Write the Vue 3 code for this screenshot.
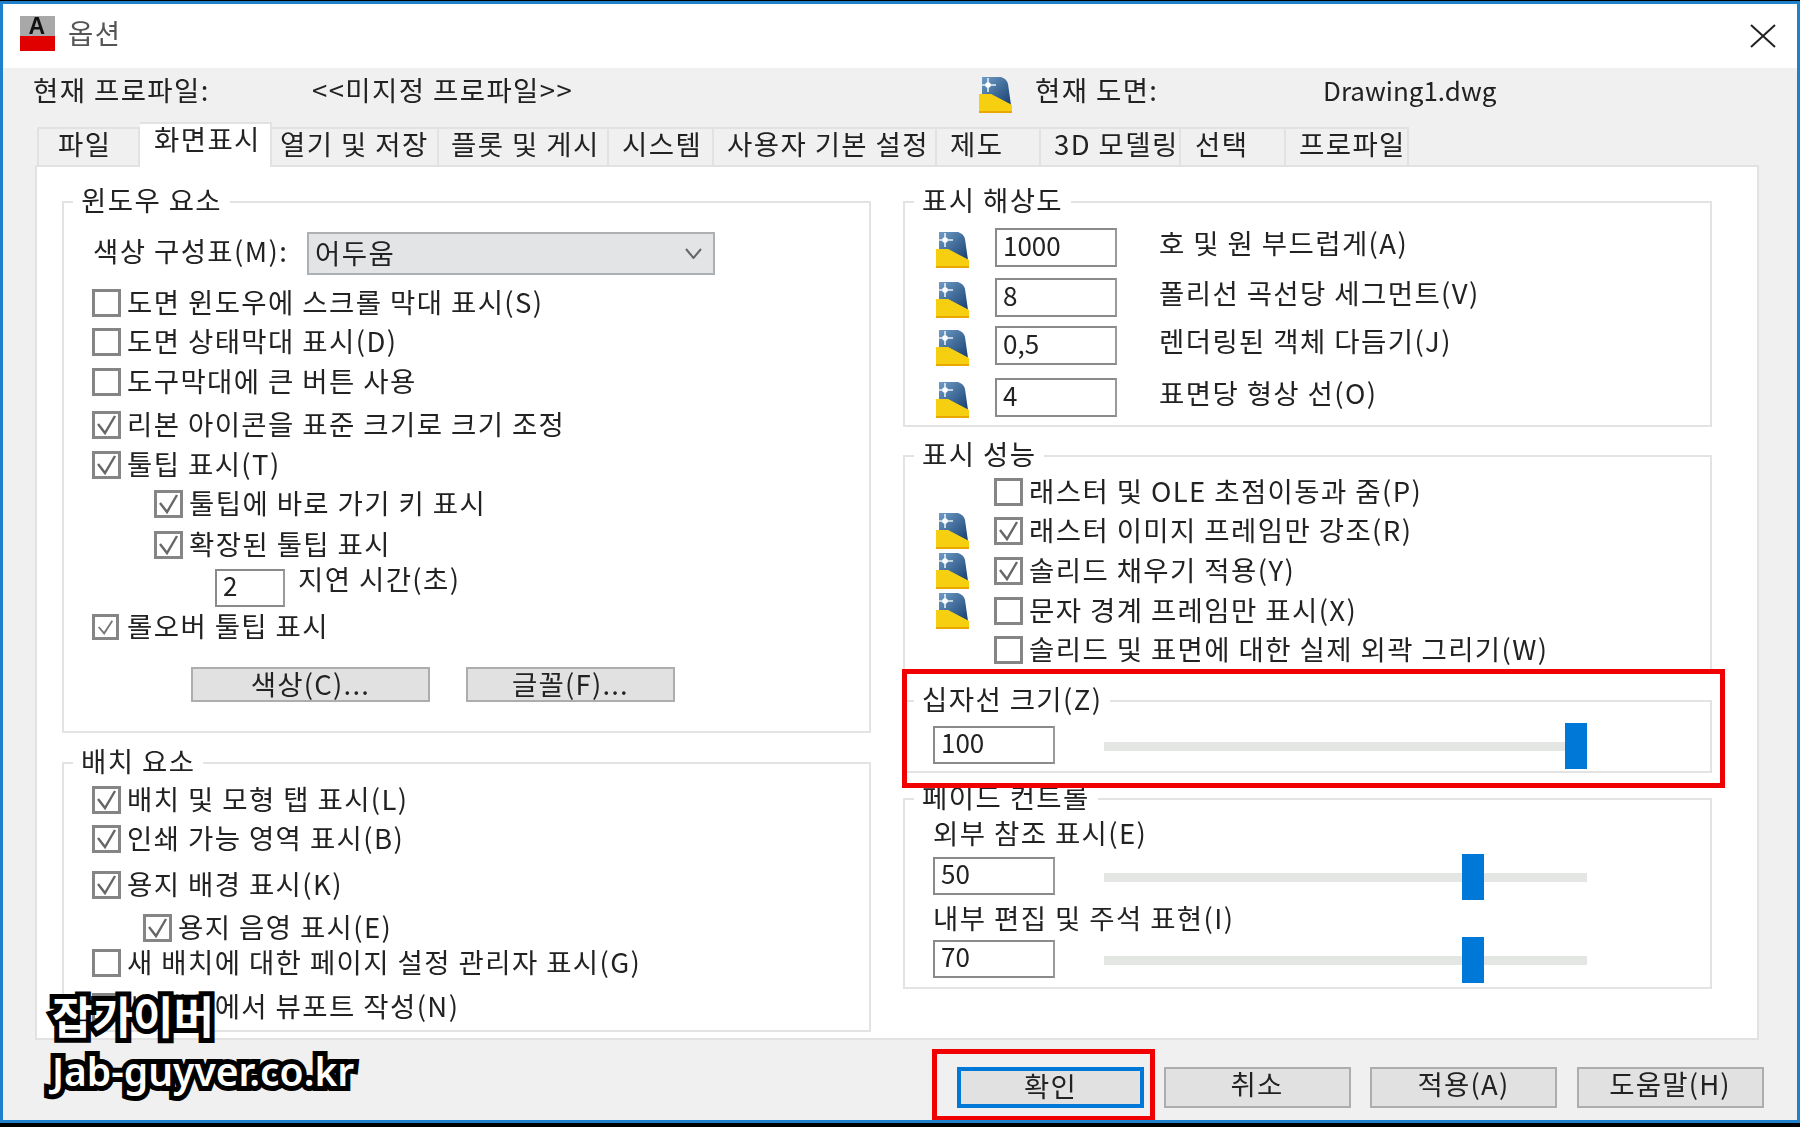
<script setup>
const tabs = [
  { label: '파일', width: 103, pad: 19 },
  { label: '화면표시', width: 132, pad: 14, active: true },
  { label: '열기 및 저장', width: 167, pad: 8 },
  { label: '플롯 및 게시', width: 170, pad: 12 },
  { label: '시스템', width: 105, pad: 13 },
  { label: '사용자 기본 설정', width: 223, pad: 13 },
  { label: '제도', width: 104, pad: 13 },
  { label: '3D 모델링', width: 140, pad: 13 },
  { label: '선택', width: 105, pad: 14 },
  { label: '프로파일', width: 123, pad: 13 }
]

// gap = space above the row, indent = offset from the group's left padding
const windowRows = [
  { text: '도면 윈도우에 스크롤 막대 표시(S)', gap: 9 },
  { text: '도면 상태막대 표시(D)', gap: 1 },
  { text: '도구막대에 큰 버튼 사용', gap: 2 },
  { text: '리본 아이콘을 표준 크기로 크기 조정', gap: 5, on: true },
  { text: '툴팁 표시(T)', gap: 2, on: true },
  { text: '툴팁에 바로 가기 키 표시', gap: 1, on: true, indent: 62 },
  { text: '확장된 툴팁 표시', gap: 3, on: true, indent: 62 }
]

const layoutRows = [
  { text: '배치 및 모형 탭 표시(L)', gap: 0, on: true },
  { text: '인쇄 가능 영역 표시(B)', gap: 1, on: true },
  { text: '용지 배경 표시(K)', gap: 8, on: true },
  { text: '용지 음영 표시(E)', gap: 5, on: true, indent: 51 },
  { text: '새 배치에 대한 페이지 설정 관리자 표시(G)', gap: -3 },
  { text: '새 배치에서 뷰포트 작성(N)', gap: 6 }
]

const resolutionRows = [
  { value: '1000', text: '호 및 원 부드럽게(A)', gap: 8 },
  { value: '8', text: '폴리선 곡선당 세그먼트(V)', gap: 11 },
  { value: '0,5', text: '렌더링된 객체 다듬기(J)', gap: 9 },
  { value: '4', text: '표면당 형상 선(O)', gap: 13 }
]

const performanceRows = [
  { text: '래스터 및 OLE 초점이동과 줌(P)', gap: -1 },
  { text: '래스터 이미지 프레임만 강조(R)', gap: 1, on: true, icon: true },
  { text: '솔리드 채우기 적용(Y)', gap: 2, on: true, icon: true },
  { text: '문자 경계 프레임만 표시(X)', gap: 2, icon: true },
  { text: '솔리드 및 표면에 대한 실제 외곽 그리기(W)', gap: 1 }
]

const footerButtons = [
  { label: '확인', primary: true },
  { label: '취소' },
  { label: '적용(A)' },
  { label: '도움말(H)' }
]
</script>

<template>
  <div class="dialog">
    <div class="titlebar">
      <div class="app-icon"><span>A</span></div>
      <span class="title">옵션</span>
      <svg class="close" width="26" height="24" viewBox="0 0 26 24">
        <path d="M1 1 L25 23 M25 1 L1 23" stroke="#222" stroke-width="2" fill="none" />
      </svg>
    </div>

    <div class="profile">
      <span class="profile-text">현재 프로파일:</span>
      <span class="profile-text">&lt;&lt;미지정 프로파일&gt;&gt;</span>
      <svg class="dwg-icon" width="33" height="36" viewBox="0 0 33 36">
        <defs>
          <linearGradient id="dwgBlue" x1="0" y1="0" x2="1" y2="1">
            <stop offset="0" stop-color="#6f9cc6" />
            <stop offset="1" stop-color="#163f70" />
          </linearGradient>
        </defs>
        <path d="M3 0 H22 Q28 2 29 7 L32 28 L11 17 H3 Z" fill="url(#dwgBlue)" />
        <path d="M9 1 V15 M3 8 H17" stroke="#e8f0f7" stroke-width="1.6" />
        <circle cx="9" cy="8" r="2.8" fill="#fff" />
        <path d="M0 17 H12 L33 28 V36 H0 Z" fill="#f5cf10" />
        <path d="M0 34 H33 V36 H0 Z" fill="#e8a800" />
      </svg>
      <span class="profile-text">현재 도면:</span>
      <span class="profile-text drawing-name">Drawing1.dwg</span>
    </div>

    <div class="tabs">
      <div
        v-for="tab in tabs"
        :key="tab.label"
        class="tab"
        :class="{ active: tab.active }"
        :style="{ width: tab.width + 'px', paddingLeft: tab.pad + 'px' }"
      >{{ tab.label }}</div>
    </div>

    <div class="panel">
      <div class="column">
        <fieldset class="group group-window">
          <legend>윈도우 요소</legend>
          <div class="body">
            <div class="combo-row">
              <span class="combo-label">색상 구성표(M):</span>
              <div class="combo">
                <span class="combo-text">어두움</span>
                <svg width="17" height="11" viewBox="0 0 17 11">
                  <path d="M1 1 L8.5 10 L16 1" stroke="#666" stroke-width="2" fill="none" />
                </svg>
              </div>
            </div>
            <div
              v-for="row in windowRows"
              :key="row.text"
              class="row"
              :style="{ marginTop: row.gap + 'px', paddingLeft: (row.indent || 0) + 'px' }"
            >
              <span class="check">
                <svg v-if="row.on" width="23" height="22" viewBox="0 0 23 22">
                  <path d="M3 10 L10 19 L20 2" stroke="#666" stroke-width="2.4" fill="none" />
                </svg>
              </span>
              <span class="row-text">{{ row.text }}</span>
            </div>
            <div class="row delay-row">
              <input class="field field-small" value="2" readonly />
              <span class="delay-label">지연 시간(초)</span>
            </div>
            <div class="row rollover">
              <span class="check check-small">
                <svg width="21" height="20" viewBox="0 0 23 22">
                  <path d="M4 11 L10 18 L19 4" stroke="#777" stroke-width="2" fill="none" />
                </svg>
              </span>
              <span class="row-text">롤오버 툴팁 표시</span>
            </div>
            <div class="group-buttons">
              <button class="btn btn-color">색상(C)...</button>
              <button class="btn btn-font">글꼴(F)...</button>
            </div>
          </div>
        </fieldset>

        <fieldset class="group group-layout">
          <legend>배치 요소</legend>
          <div class="body">
            <div
              v-for="row in layoutRows"
              :key="row.text"
              class="row"
              :style="{ marginTop: row.gap + 'px', paddingLeft: (row.indent || 0) + 'px' }"
            >
              <span class="check">
                <svg v-if="row.on" width="23" height="22" viewBox="0 0 23 22">
                  <path d="M3 10 L10 19 L20 2" stroke="#666" stroke-width="2.4" fill="none" />
                </svg>
              </span>
              <span class="row-text">{{ row.text }}</span>
            </div>
          </div>
        </fieldset>
      </div>

      <div class="column">
        <fieldset class="group group-resolution">
          <legend>표시 해상도</legend>
          <div class="body body-icons">
            <div
              v-for="row in resolutionRows"
              :key="row.value"
              class="res-row"
              :style="{ marginTop: row.gap + 'px' }"
            >
              <svg class="dwg-icon res-icon" width="33" height="36" viewBox="0 0 33 36">
                <path d="M3 0 H22 Q28 2 29 7 L32 28 L11 17 H3 Z" fill="url(#dwgBlue)" />
                <path d="M9 1 V15 M3 8 H17" stroke="#e8f0f7" stroke-width="1.6" />
                <circle cx="9" cy="8" r="2.8" fill="#fff" />
                <path d="M0 17 H12 L33 28 V36 H0 Z" fill="#f5cf10" />
                <path d="M0 34 H33 V36 H0 Z" fill="#e8a800" />
              </svg>
              <input class="field res-field" :value="row.value" readonly />
              <span class="res-label">{{ row.text }}</span>
            </div>
          </div>
        </fieldset>

        <fieldset class="group group-performance">
          <legend>표시 성능</legend>
          <div class="body body-icons">
            <div
              v-for="row in performanceRows"
              :key="row.text"
              class="row"
              :style="{ marginTop: row.gap + 'px' }"
            >
              <span class="icon-slot">
                <svg v-if="row.icon" class="dwg-icon" width="33" height="36" viewBox="0 0 33 36">
                  <path d="M3 0 H22 Q28 2 29 7 L32 28 L11 17 H3 Z" fill="url(#dwgBlue)" />
                  <path d="M9 1 V15 M3 8 H17" stroke="#e8f0f7" stroke-width="1.6" />
                  <circle cx="9" cy="8" r="2.8" fill="#fff" />
                  <path d="M0 17 H12 L33 28 V36 H0 Z" fill="#f5cf10" />
                  <path d="M0 34 H33 V36 H0 Z" fill="#e8a800" />
                </svg>
              </span>
              <span class="check">
                <svg v-if="row.on" width="23" height="22" viewBox="0 0 23 22">
                  <path d="M3 10 L10 19 L20 2" stroke="#666" stroke-width="2.4" fill="none" />
                </svg>
              </span>
              <span class="row-text">{{ row.text }}</span>
            </div>
          </div>
        </fieldset>

        <fieldset class="group group-crosshair">
          <legend>십자선 크기(Z)</legend>
          <div class="body">
            <div class="slider-row crosshair-row">
              <input class="field" value="100" readonly />
              <div class="slider"><i class="thumb" style="left: 461px"></i></div>
            </div>
          </div>
        </fieldset>

        <fieldset class="group group-fade">
          <legend>페이드 컨트롤</legend>
          <div class="body">
            <div class="fade-label">외부 참조 표시(E)</div>
            <div class="slider-row fade-row-a">
              <input class="field" value="50" readonly />
              <div class="slider"><i class="thumb" style="left: 358px"></i></div>
            </div>
            <div class="fade-label fade-label-b">내부 편집 및 주석 표현(I)</div>
            <div class="slider-row fade-row-b">
              <input class="field" value="70" readonly />
              <div class="slider"><i class="thumb" style="left: 358px"></i></div>
            </div>
          </div>
        </fieldset>
      </div>
    </div>

    <div class="footer">
      <button
        v-for="btn in footerButtons"
        :key="btn.label"
        class="btn footer-btn"
        :class="{ primary: btn.primary }"
      >{{ btn.label }}</button>
    </div>

    <div class="red-box red-crosshair"></div>
    <div class="red-box red-ok"></div>

    <div class="watermark">
      <div class="wm-name">잡가이버</div>
      <div class="wm-url">Jab-guyver.co.kr</div>
    </div>
  </div>
</template>

<style>
body {
  margin: 0;
  background: #000;
}
</style>

<style scoped>
.dialog {
  position: relative;
  box-sizing: border-box;
  width: 1800px;
  height: 1122px;
  margin-top: 1px;
  border: 3px solid #1f80cc;
  background: #f0f0f0;
  font-family: "Noto Sans CJK KR", "Noto Sans", sans-serif;
  font-size: 27.5px;
  letter-spacing: 1.4px;
  color: #222;
  overflow: hidden;
}
/* the reference is an upscaled capture, everything is a little soft */
.titlebar,
.profile,
.tabs,
.panel,
.footer {
  filter: blur(0.6px);
}
.titlebar {
  display: flex;
  align-items: center;
  height: 64px;
  padding-left: 17px;
  background: #fff;
}
.app-icon {
  width: 35px;
  height: 35px;
  margin-bottom: 5px;
  background: linear-gradient(#a8a8a8 58%, #e00000 58%);
  text-align: center;
  font: bold 23px/21px "Liberation Sans", sans-serif;
  color: #111;
}
.title {
  margin-left: 13px;
  padding-bottom: 9px;
  color: #555;
}
.close {
  margin-left: auto;
  margin-right: 21px;
}
.profile {
  display: grid;
  grid-template-columns: 279px 667px 56px 288px auto;
  align-items: center;
  height: 54px;
  padding-left: 30px;
}
.profile-text {
  padding-bottom: 12px;
}
.drawing-name {
  font-size: 26px;
  letter-spacing: 0;
}
.dwg-icon {
  display: block;
}
.tabs {
  position: relative;
  z-index: 1;
  display: flex;
  align-items: flex-end;
  height: 45px;
  margin: 0 0 -2px 34px;
}
.tab {
  box-sizing: border-box;
  height: 40px;
  line-height: 28px;
  border: 2px solid #e2e2e2;
  border-left-width: 0;
  border-bottom-width: 0;
  white-space: nowrap;
}
.tab:first-child {
  border-left-width: 2px;
}
.tab.active {
  height: 45px;
  background: #fff;
  line-height: 29px;
}
.panel {
  display: grid;
  grid-template-columns: 809px 809px;
  column-gap: 32px;
  box-sizing: border-box;
  width: 1724px;
  height: 875px;
  margin-left: 32px;
  padding: 17px 0 0 25px;
  border: 2px solid #e2e2e2;
  background: #fff;
}
.column {
  display: flex;
  flex-direction: column;
}
.group {
  box-sizing: border-box;
  min-width: 0;
  margin: 0;
  padding: 0;
  border: 2px solid #e3e3e3;
}
.group legend {
  margin-left: 9px;
  padding: 0 8px;
  line-height: 31px;
  height: 36px;
  white-space: nowrap;
}
.group-window { height: 549px; }
.group-layout { height: 287px; margin-top: 12px; }
.group-resolution { height: 243px; }
.group-performance { height: 236px; margin-top: 11px; }
.group-crosshair { height: 90px; margin-top: 9px; }
.group-fade { height: 208px; margin-top: 8px; }
.body {
  padding-left: 28px;
}
.body-icons {
  padding-left: 31px;
}
.combo-row {
  display: flex;
  align-items: center;
  height: 43px;
  margin-top: 12px;
}
.combo-label {
  width: 215px;
  height: 43px;
  padding-left: 1px;
  margin-right: -1px;
  line-height: 37px;
  white-space: nowrap;
}
.combo {
  display: flex;
  align-items: center;
  justify-content: space-between;
  box-sizing: border-box;
  width: 408px;
  height: 43px;
  padding: 0 11px 0 6px;
  background: #e3e4e6;
  border: 2px solid #adb0b3;
}
.combo-text {
  height: 39px;
  line-height: 36px;
}
.row {
  display: flex;
  align-items: center;
  height: 38px;
  white-space: nowrap;
}
.row-text {
  padding-bottom: 5px;
}
.check {
  flex: none;
  box-sizing: border-box;
  width: 29px;
  height: 28px;
  margin-right: 6px;
  border: 3px solid #858585;
  background: #fff;
}
.check svg {
  display: block;
}
.check-small {
  width: 27px;
  height: 26px;
  margin-right: 8px;
}
.field {
  box-sizing: border-box;
  display: block;
  width: 122px;
  height: 38px;
  padding: 0 0 7px 6px;
  border: 2px solid #8a8a8a;
  border-right-color: #9a9a9a;
  outline: none;
  background: #fff;
  font-family: inherit;
  font-size: 26px;
  letter-spacing: 0;
  color: #222;
}
.field-small {
  width: 70px;
  margin-left: 123px;
}
.delay-row {
  margin-top: 5px;
}
.delay-label {
  align-self: flex-start;
  margin: -10px 0 0 13px;
  line-height: 38px;
}
.rollover {
  margin-top: 1px;
}
.group-buttons {
  display: flex;
  gap: 36px;
  margin: 21px 0 0 99px;
}
.btn {
  box-sizing: border-box;
  height: 35px;
  padding: 0 0 5px;
  background: #e1e1e1;
  border: 2px solid #adadad;
  font: inherit;
  letter-spacing: 1.2px;
  line-height: 28px;
  color: #222;
}
.btn-color { width: 239px; }
.btn-font { width: 209px; }
.res-row {
  display: flex;
  align-items: flex-start;
  height: 39px;
  white-space: nowrap;
}
.res-icon {
  margin-top: 4px;
}
.res-field {
  height: 39px;
  margin-left: 26px;
}
.res-label {
  margin: -5px 0 0 42px;
  line-height: 39px;
}
.icon-slot {
  flex: none;
  width: 33px;
  margin-right: 25px;
}
.slider-row {
  display: flex;
  align-items: flex-start;
}
.crosshair-row {
  padding-top: 7px;
}
.slider {
  position: relative;
  width: 483px;
  height: 46px;
  margin: -3px 0 -5px 49px;
  background: linear-gradient(#e4e6e4, #e4e6e4) center / 100% 9px no-repeat;
}
.thumb {
  position: absolute;
  top: 0;
  width: 22px;
  height: 46px;
  background: #0078d7;
}
.fade-label {
  height: 32px;
  line-height: 30px;
}
.fade-row-a {
  margin-top: 8px;
}
.fade-label-b {
  margin-top: 7px;
}
.fade-row-b {
  margin-top: 6px;
}
.footer {
  display: flex;
  gap: 19.5px;
  padding: 27px 0 0 954px;
}
.footer-btn {
  width: 187px;
  height: 41px;
  padding-bottom: 9px;
  line-height: 28px;
}
.footer-btn.primary {
  border: 4px solid #0078d7;
}
.red-box {
  position: absolute;
  box-sizing: border-box;
  border: 5px solid #f00000;
  z-index: 2;
}
.red-crosshair {
  left: 899px;
  top: 665px;
  width: 823px;
  height: 119px;
}
.red-ok {
  left: 929px;
  top: 1045px;
  width: 223px;
  height: 72px;
}
.watermark {
  position: absolute;
  left: 49px;
  top: 983px;
  z-index: 3;
  color: #fff;
  font-weight: 700;
  letter-spacing: 0;
  paint-order: stroke fill;
  -webkit-text-stroke: 10px #000;
}
.wm-name {
  font-size: 44px;
  line-height: 56px;
}
.wm-url {
  margin-top: 2px;
  font-family: "Noto Sans", sans-serif;
  font-size: 39px;
  font-weight: 600;
  line-height: 52px;
  letter-spacing: 0;
}
</style>
